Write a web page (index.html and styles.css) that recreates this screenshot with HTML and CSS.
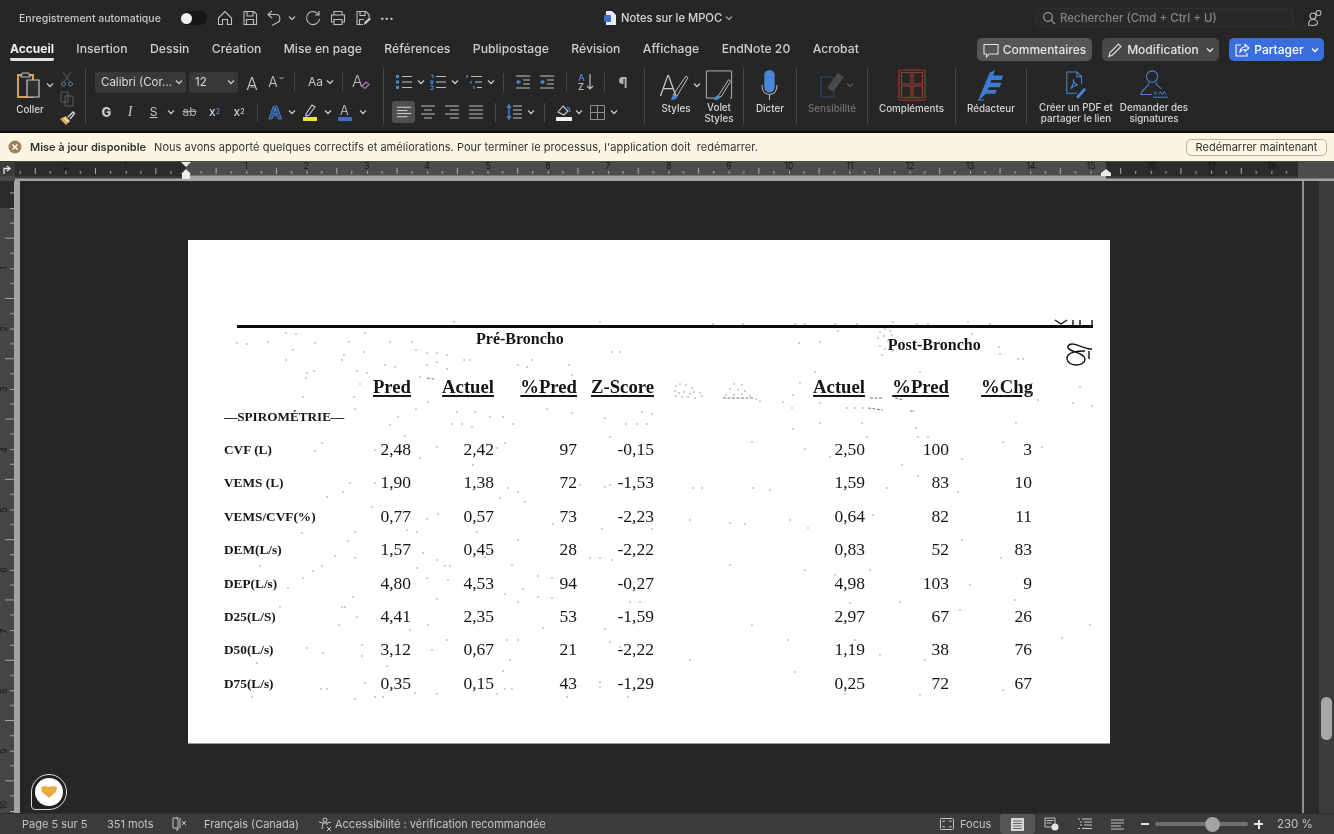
FILE: index.html
```html
<!DOCTYPE html>
<html lang="fr">
<head>
<meta charset="utf-8">
<title>Notes sur le MPOC</title>
<link rel="stylesheet" href="styles.css">
</head>
<body>
<svg class="defs" width="0" height="0" aria-hidden="true"><defs>
<symbol id="car" viewBox="0 0 8 6"><path d="M1 1.5l3 3 3-3" fill="none" stroke="currentColor" stroke-width="1.3"/></symbol>
<symbol id="lines" viewBox="0 0 20 16"><path d="M1 2h18M1 6h13M1 10h18M1 14h13" fill="none" stroke="currentColor" stroke-width="1.3"/></symbol>
</defs></svg>
<div class="app">
  <header class="titlebar">
    <span class="autosave">Enregistrement automatique</span>
    <span class="toggle"><span class="knob"></span></span>
    <svg class="qa q-home" width="16" height="16" viewBox="0 0 16 16"><path d="M1.5 8 8 1.5 14.500 8v6.500h-4V9.500h-5v5h-4z"/></svg>
    <svg class="qa q-save" width="16" height="16" viewBox="0 0 16 16"><path d="M2 1.500h10l2.500 2.500v10.500H2zM5 1.500v4.500h6V1.500M4.500 14.500V9.500h7v5"/></svg>
    <svg class="qa q-undo" width="16" height="16" viewBox="0 0 16 16"><path d="M6 1 2 4.500 6 8M2 4.500h7.500a4.300 4.300 0 0 1 1 8.500L6 15.500"/></svg>
    <svg class="qcar"><use href="#car"/></svg>
    <svg class="qa q-redo" width="16" height="16" viewBox="0 0 16 16"><path d="M13.500 4.500A6.500 6.500 0 1 0 14.500 9M14 1v4h-4"/></svg>
    <svg class="qa q-print" width="16" height="16" viewBox="0 0 16 16"><path d="M4 5V1.500h8V5M4 12H1.500V5h13v7H12M4 9.500h8v5H4z"/></svg>
    <svg class="qa q-as" width="16" height="16" viewBox="0 0 16 16"><path d="M8 14.500H2v-13h9l3 3v3M5 1.500v4h5v-4M4.500 14V9.500H9"/><path class="fillw" d="M9 15l.5-3 5-4.500 1.500 1.500-5 4.700z"/></svg>
    <span class="more">···</span>
    <div class="doc">
      <svg width="12" height="14" viewBox="0 0 12 14"><path d="M2 0h6l4 4v10H2z" fill="#e8edf5"/><rect y="4" width="7" height="7" rx="1" fill="#3c6fc4"/></svg>
      <span>Notes sur le MPOC</span>
      <svg class="doccar"><use href="#car"/></svg>
    </div>
    <div class="search">
      <svg width="14" height="14" viewBox="0 0 14 14"><circle cx="6" cy="6" r="4.300" fill="none" stroke="#9a9a9a" stroke-width="1.200"/><path d="M9.200 9.200 13 13" stroke="#9a9a9a" stroke-width="1.200"/></svg>
      <span>Rechercher (Cmd + Ctrl + U)</span>
    </div>
    <svg class="qa q-people" width="16" height="18" viewBox="0 0 16 18"><circle cx="6" cy="7" r="3"/><circle cx="11.500" cy="4" r="2.500"/><path d="M1.500 16c0-4 2-5.500 4.500-5.500s4.500 1.500 4.500 3c0 2-2 3-4.500 3z"/></svg>
  </header>

  <nav class="tabsbar">
    <div class="tabs">
      <span class="tab active">Accueil</span><span class="tab">Insertion</span><span class="tab">Dessin</span><span class="tab">Création</span><span class="tab">Mise en page</span><span class="tab">Références</span><span class="tab">Publipostage</span><span class="tab">Révision</span><span class="tab">Affichage</span><span class="tab">EndNote 20</span><span class="tab">Acrobat</span>
    </div>
    <div class="actions">
      <button class="act act-com"><svg width="16" height="16" viewBox="0 0 16 16"><path d="M1 2.500h14v9.500H6L3.500 15v-3H1z" fill="none" stroke="#e2e2e2" stroke-width="1.100"/></svg>Commentaires</button>
      <button class="act act-mod"><svg width="16" height="16" viewBox="0 0 16 16"><path d="M2 14.500l1-4L11.500 2l2.500 2.500L5.500 13z" fill="none" stroke="#e2e2e2" stroke-width="1.100"/></svg>Modification<svg class="actcar"><use href="#car"/></svg></button>
      <button class="act act-share"><svg width="16" height="16" viewBox="0 0 16 16"><path d="M7 3H2v11h11v-3M6 10c0-3 2-5 5-5V2.500L15 6l-4 3.500V7.500C9 7.500 7 8.500 6 10z" fill="none" stroke="#fff" stroke-width="1.100"/></svg>Partager<svg class="actcar"><use href="#car"/></svg></button>
    </div>
  </nav>

  <section class="ribbon">
    <div class="grp g-clip">
      <div class="paste">
        <svg width="30" height="28" viewBox="0 0 30 28"><path d="M3 4h15v22H3z" fill="none" stroke="#d9a24f" stroke-width="2"/><path d="M7 4V2h7v2l1.500 2h-10z" fill="#2a2a2a" stroke="#bbb"/><path d="M12 9h12v17H12z" fill="#2f2f2f" stroke="#c9c9c9" stroke-width="1.200"/></svg>
        <span class="lbl">Coller</span>
      </div>
      <svg class="pastecar"><use href="#car"/></svg>
      <div class="clipcol">
        <svg width="14" height="16" viewBox="0 0 14 16"><path d="M3 1l7 10M11 1 4 11" stroke="#5b5b5b" fill="none"/><circle cx="3.500" cy="13" r="2" fill="none" stroke="#5f7fa5"/><circle cx="10.500" cy="13" r="2" fill="none" stroke="#5f7fa5"/></svg>
        <svg width="14" height="16" viewBox="0 0 14 16"><path d="M1 1h7v10H1zM5 5h8v10H5z" fill="none" stroke="#5b5b5b"/></svg>
        <svg width="16" height="15" viewBox="0 0 16 15"><path d="M1 8l6-3 4 5-4 4z" fill="#e0aa55"/><path d="M9 6l5-5 1.500 1.500L11 8" fill="none" stroke="#ddd" stroke-width="1.300"/><path d="M5 7l5 4" stroke="#eee" stroke-width="1.500"/></svg>
      </div>
    </div>

    <div class="grp g-font">
      <div class="row">
        <span class="sel sel-font">Calibri (Cor...<svg class="c"><use href="#car"/></svg></span>
        <span class="sel sel-size">12<svg class="c"><use href="#car"/></svg></span>
        <span class="ib w24 glyph big">A<svg class="hat" width="5" height="4" viewBox="0 0 5 4"><path d="M.5 3 2.500 1l2 2" fill="none" stroke="#c0c0c0"/></svg></span>
        <span class="ib w24 glyph med">A<svg class="hat" width="5" height="4" viewBox="0 0 5 4"><path d="M.5 1l2 2 2-2" fill="none" stroke="#c0c0c0"/></svg></span>
        <span class="sp w12"><i></i></span>
        <span class="ib w25 glyph aa">Aa</span>
        <span class="ib w10"><svg class="c"><use href="#car"/></svg></span>
        <span class="sp w14"><i></i></span>
        <span class="ib w24"><svg width="20" height="20" viewBox="0 0 20 20"><text x="1" y="15" class="svgt">A</text><path d="M11 14l4-4 3 2.500-4 4z" fill="none" stroke="#b06cc0" stroke-width="1.200"/></svg></span>
      </div>
      <div class="row">
        <span class="ib w23 glyph bold">G</span>
        <span class="ib w24 glyph ital">I</span>
        <span class="ib w23 glyph und">S</span>
        <span class="ib w12"><svg class="c"><use href="#car"/></svg></span>
        <span class="ib w25 glyph strike">ab</span>
        <span class="ib w25 glyph xs">x<sub>2</sub></span>
        <span class="ib w24 glyph xs">x<sup>2</sup></span>
        <span class="sp w12"><i></i></span>
        <span class="ib w23"><svg width="16" height="18" viewBox="0 0 16 18"><text x="1.500" y="16" class="svgt bluet">A</text></svg></span>
        <span class="ib w12"><svg class="c"><use href="#car"/></svg></span>
        <span class="ib w24"><svg width="16" height="18" viewBox="0 0 16 18"><path d="M4 11 10 2l3 2-6 8-3 1z" fill="none" stroke="#cfcfcf" stroke-width="1.100"/><rect x="1" y="14" width="14" height="4" fill="#f2e338"/></svg></span>
        <span class="ib w11"><svg class="c"><use href="#car"/></svg></span>
        <span class="ib w24"><svg width="16" height="18" viewBox="0 0 16 18"><text x="3" y="12" class="svgt small">A</text><rect x="1" y="14" width="14" height="4" fill="#3f6fc4"/></svg></span>
        <span class="ib w11"><svg class="c"><use href="#car"/></svg></span>
      </div>
    </div>

    <div class="grp g-para">
      <div class="row">
        <span class="ib w24"><svg width="16" height="16" viewBox="0 0 16 16"><path d="M6 2.500h10M6 8h10M6 13.500h10" stroke="#bdbdbd" stroke-width="1.200"/><path d="M0 1h3v3H0zM0 6.500h3v3H0zM0 12h3v3H0z" fill="#4a8ad4"/></svg></span>
        <span class="ib w10"><svg class="c"><use href="#car"/></svg></span>
        <span class="ib w24"><svg width="16" height="16" viewBox="0 0 16 16"><path d="M6 2.500h10M6 8h10M6 13.500h10" stroke="#bdbdbd" stroke-width="1.200"/><path d="M1 1h2v3M0 7h3v1.200H1v1.300h2M0 12h3v3.500H0" fill="none" stroke="#4a8ad4"/></svg></span>
        <span class="ib w10"><svg class="c"><use href="#car"/></svg></span>
        <span class="ib w24 ml2"><svg width="16" height="16" viewBox="0 0 16 16"><path d="M5 2.500h11M9 8h7M11 13.500h5" stroke="#bdbdbd" stroke-width="1.200"/><path d="M1 1v3M5 7v2.500M8 12v3" fill="none" stroke="#4a8ad4" stroke-width="1.300"/></svg></span>
        <span class="ib w10"><svg class="c"><use href="#car"/></svg></span>
        <span class="sp w15"><i></i></span>
        <span class="ib w24"><svg width="14" height="14" viewBox="0 0 14 14"><path d="M0 1h14M7 5h7M7 9h7M0 13h14" stroke="#bdbdbd" stroke-width="1.200"/><path d="M5 7H1M3 5 1 7l2 2" fill="none" stroke="#4a8ad4" stroke-width="1.300"/></svg></span>
        <span class="ib w24"><svg width="14" height="14" viewBox="0 0 14 14"><path d="M0 1h14M7 5h7M7 9h7M0 13h14" stroke="#bdbdbd" stroke-width="1.200"/><path d="M0 7h4M2 5l2 2-2 2" fill="none" stroke="#4a8ad4" stroke-width="1.300"/></svg></span>
        <span class="sp w14"><i></i></span>
        <span class="ib w26"><svg width="16" height="18" viewBox="0 0 16 18"><text x="0" y="8" class="svgt tiny blues">A</text><text x="0" y="17" class="svgt tiny">Z</text><path d="M12 1v15M9 13l3 3 3-3" fill="none" stroke="#bdbdbd" stroke-width="1.200"/></svg></span>
        <span class="sp w10"><i></i></span>
        <span class="ib w24 ml2 glyph para">¶</span>
      </div>
      <div class="row">
        <span class="ib w23 on"><svg class="al"><use href="#lines"/></svg></span>
        <span class="ib w24 ml1"><svg width="14" height="14" viewBox="0 0 14 14"><path d="M0 1h14M3 5h8M0 9h14M3 13h8" stroke="#bdbdbd" stroke-width="1.200"/></svg></span>
        <span class="ib w24"><svg width="14" height="14" viewBox="0 0 14 14"><path d="M0 1h14M5 5h9M0 9h14M5 13h9" stroke="#bdbdbd" stroke-width="1.200"/></svg></span>
        <span class="ib w24"><svg width="14" height="14" viewBox="0 0 14 14"><path d="M0 1h14M0 5h14M0 9h14M0 13h14" stroke="#bdbdbd" stroke-width="1.200"/></svg></span>
        <span class="sp w14"><i></i></span>
        <span class="ib w24"><svg width="16" height="16" viewBox="0 0 16 16"><path d="M7 2h9M7 6h9M7 10h9M7 14h9" stroke="#bdbdbd" stroke-width="1.200"/><path d="M3 2v12M1 4l2-3 2 3M1 12l2 3 2-3" fill="none" stroke="#4a8ad4" stroke-width="1.300"/></svg></span>
        <span class="ib w10"><svg class="c"><use href="#car"/></svg></span>
        <span class="sp w16"><i></i></span>
        <span class="ib w24"><svg width="16" height="18" viewBox="0 0 16 18"><path d="M2 9l5-6 5 5-4 4z" fill="none" stroke="#cfcfcf" stroke-width="1.100"/><path d="M11 4q3 1 3 5" stroke="#4a8ad4" fill="none" stroke-width="1.300"/><rect y="14" width="16" height="4" fill="#efefef"/></svg></span>
        <span class="ib w10 mln"><svg class="c"><use href="#car"/></svg></span>
        <span class="ib w24 ml1"><svg width="15" height="15" viewBox="0 0 15 15"><path d="M.5.5h14v14H.5zM7.500.5v14M.5 7.500h14" fill="none" stroke="#8f8f8f"/></svg></span>
        <span class="ib w10"><svg class="c"><use href="#car"/></svg></span>
      </div>
    </div>

    <div class="grp g-styles">
      <div class="big b-styles">
        <div class="ico">
          <svg width="34" height="32" viewBox="0 0 34 32"><text x="0" y="27" class="svgt huge">A</text><path d="M14 26 27 7l2 1.500L18 27z" fill="none" stroke="#bdbdbd"/><path d="M12 31c0-3 2-5 5-4.500s1 4.500-5 4.500z" fill="#4a8ad4"/></svg>
          <svg class="bigcar"><use href="#car"/></svg>
        </div>
        <span class="lbl">Styles</span>
      </div>
      <div class="big b-volet">
        <div class="ico"><svg width="30" height="32" viewBox="0 1 30 33"><path d="M12 31H2V3h26v28h-2" fill="none" stroke="#b5b5b5"/><path d="M14 29 25 12l2 1.500L17 30z" fill="none" stroke="#bdbdbd"/><path d="M10 33c0-3 2-5 5-4.500s1 4.500-5 4.500z" fill="#4a8ad4"/></svg></div>
        <span class="lbl">Volet<br>Styles</span>
      </div>
    </div>
    <div class="grp g-dict">
      <div class="big">
        <div class="ico"><svg width="19" height="32" viewBox="0 1 20 34"><rect x="4.500" y="2" width="11" height="24" rx="5.500" fill="#4a86d8"/><path d="M2 18c0 6 3 10 8 10s8-4 8-10M10 28v6" fill="none" stroke="#bdbdbd" stroke-width="1.100"/></svg></div>
        <span class="lbl">Dicter</span>
      </div>
    </div>
    <div class="grp g-sens">
      <div class="big dim">
        <div class="ico">
          <svg width="26" height="32" viewBox="0 0 26 32"><path d="M2 8h11l2 3v17H2z" fill="none" stroke="#2e4663" stroke-width="1.200"/><path d="M8 19 19 4l6 4-11 15z" fill="#4a4a4a"/></svg>
          <svg class="bigcar senscar"><use href="#car"/></svg>
        </div>
        <span class="lbl">Sensibilité</span>
      </div>
    </div>
    <div class="grp g-comp">
      <div class="big">
        <div class="ico"><svg width="28" height="32" viewBox="0 3 28 32"><path d="M1 4h26v30H1zM3.500 6.500h9.500v11.500H3.500zM15 6.500h9.500v11.500H15zM3.500 20h9.500v11.500H3.500zM15 20h9.500v11.500H15z" fill="none" stroke="#97412a" stroke-width="1.100"/></svg></div>
        <span class="lbl">Compléments</span>
      </div>
    </div>
    <div class="grp g-red">
      <div class="big">
        <div class="ico"><svg width="29" height="32" viewBox="0 1 30 35"><path d="M2 34 14 5l6-3-2 6h11l-2 5H16l-1 3h12l-2 5H13l-1 3h10l-2 4H10l-7 7z" fill="#3f7bd0"/><path d="M1 35h7" stroke="#3f7bd0" stroke-width="1.200"/></svg></div>
        <span class="lbl">Rédacteur</span>
      </div>
    </div>
    <div class="grp g-pdf">
      <div class="big b-pdf">
        <div class="ico"><svg width="24" height="32" viewBox="0 2 26 34"><path d="M14 28H3V5h11l5 5v8M14 5v5h5M7 23c2-2 4-7 3-10 1 4 3 6 5 6-3 0-6 2-8 4z" fill="none" stroke="#4a86d8" stroke-width="1.100"/><path d="M15 32l7-8" stroke="#4a86d8" stroke-width="3" stroke-linecap="round" fill="none"/></svg></div>
        <span class="lbl">Créer un PDF et<br>partager le lien</span>
      </div>
      <div class="big b-sign">
        <div class="ico"><svg width="32" height="32" viewBox="0 2 34 34"><circle cx="15" cy="10" r="6" fill="none" stroke="#4a86d8" stroke-width="1.100"/><path d="M12 16c0 4-8 8-9 13h12M19 16c0 3 3 5 6 7" fill="none" stroke="#4a86d8" stroke-width="1.100"/><path d="M17 26l3 3m0-3-3 3M22 29l2-3 2 3 2-3 2 3M16 32h16" fill="none" stroke="#4a86d8"/></svg></div>
        <span class="lbl">Demander des<br>signatures</span>
      </div>
    </div>
  </section>

  <aside class="notice">
    <svg class="nclose" width="14" height="14" viewBox="0 0 14 14"><circle cx="7" cy="7" r="6.500" fill="#a08257"/><path d="M4.500 4.500l5 5m0-5-5 5" stroke="#fff" stroke-width="1.500"/></svg>
    <strong>Mise à jour disponible</strong>
    <span class="ntext">Nous avons apporté quelques correctifs et améliorations. Pour terminer le processus, l'application doit&nbsp; redémarrer.</span>
    <button class="restart">Redémarrer maintenant</button>
  </aside>

  <svg class="hruler" width="1334" height="20" viewBox="0 0 1334 20">
    <defs>
      <pattern id="hticks" x="186" y="0" width="60.3" height="20" patternUnits="userSpaceOnUse">
        <path d="M15.080 10v3M45.230 10v3M30.150 7v6M.5 10v3" stroke="#aaa" fill="none"/>
      </pattern>
    </defs>
    <rect width="1334" height="20" fill="#4c4c4c"/>
    <rect x="0" y="0" width="15" height="15" fill="#3b3b3b"/>
    <path d="M4 13V7.500h5M7 5l3 2.500L7 10" fill="none" stroke="#e5e5e5" stroke-width="1.300"/>
    <rect x="0" y="15" width="15" height="5" fill="#4a4a4a"/>
    <rect x="15" y="1" width="171" height="16" fill="#2b2b2b"/>
    <rect x="1106" y="1" width="192" height="16" fill="#2b2b2b"/>
    <rect x="15" y="15" width="171" height="2.500" fill="#3b3b3b"/>
    <rect x="1106" y="15" width="192" height="2.500" fill="#3b3b3b"/>
    <rect x="186" y="14.500" width="920" height="5.500" fill="#a3a3a3"/>
    <rect x="15" y="17.500" width="171" height="2.500" fill="#a3a3a3"/>
    <rect x="1106" y="17.500" width="228" height="2.500" fill="#a3a3a3"/>
    <rect x="15" y="0" width="1283" height="14" fill="url(#hticks)"/>
    <g class="rnums">
      <text x="65" y="8">2</text><text x="125.500" y="8">1</text>
      <text x="246" y="8">1</text><text x="306" y="8">2</text><text x="367" y="8">3</text><text x="427" y="8">4</text><text x="488" y="8">5</text><text x="548" y="8">6</text><text x="608" y="8">7</text><text x="669" y="8">8</text><text x="729" y="8">9</text><text x="789" y="8">10</text><text x="850" y="8">11</text><text x="910" y="8">12</text><text x="970" y="8">13</text><text x="1031" y="8">14</text><text x="1091" y="8">15</text><text x="1152" y="8">16</text><text x="1212" y="8">17</text><text x="1272" y="8">18</text>
    </g>
    <path d="M181 1h10l-5 5zM181 13l5-5 5 5zM182 13h8v5h-8zM1101 15v-3l5-4 5 4v3z" fill="#ececec"/>
  </svg>

  <main class="workspace">
    <svg class="vruler" width="20" height="632" viewBox="0 0 20 632">
      <defs>
        <pattern id="vticks" x="0" y="27" width="20" height="60.3" patternUnits="userSpaceOnUse">
          <path d="M10 15.080h4M10 45.230h4M5 30.150h9M10 .5h4" stroke="#a8a8a8" fill="none"/>
        </pattern>
      </defs>
      <rect width="20" height="632" fill="#454545"/>
      <rect width="15" height="27" fill="#2b2b2b"/>
      <rect width="15" height="632" fill="url(#vticks)"/>
      <rect x="14" width="6" height="632" fill="#a3a3a3"/>
      <g class="vnums">
        <text transform="translate(7 87) rotate(-90)">1</text><text transform="translate(7 148) rotate(-90)">2</text><text transform="translate(7 208) rotate(-90)">3</text><text transform="translate(7 269) rotate(-90)">4</text><text transform="translate(7 329) rotate(-90)">5</text><text transform="translate(7 389) rotate(-90)">6</text><text transform="translate(7 450) rotate(-90)">7</text><text transform="translate(7 510) rotate(-90)">8</text><text transform="translate(7 570) rotate(-90)">9</text><text transform="translate(7 624) rotate(-90)">10</text>
      </g>
    </svg>
    <div class="canvas">
      <article class="page">
        <div class="scan">
          <div class="rule"></div>
          <div class="subheads"><span class="pre">Pré-Broncho</span><span class="post">Post-Broncho</span></div>
          <div class="grid head">
            <span></span><span>Pred</span><span>Actuel</span><span>%Pred</span><span>Z-Score</span><span>Actuel</span><span>%Pred</span><span>%Chg</span>
          </div>
          <div class="spiro">—SPIROMÉTRIE—</div>
          <div class="grid data"><span class="l">CVF (L)</span><span>2,48</span><span>2,42</span><span>97</span><span>-0,15</span><span>2,50</span><span>100</span><span>3</span></div>
          <div class="grid data"><span class="l">VEMS (L)</span><span>1,90</span><span>1,38</span><span>72</span><span>-1,53</span><span>1,59</span><span>83</span><span>10</span></div>
          <div class="grid data"><span class="l">VEMS/CVF(%)</span><span>0,77</span><span>0,57</span><span>73</span><span>-2,23</span><span>0,64</span><span>82</span><span>11</span></div>
          <div class="grid data"><span class="l">DEM(L/s)</span><span>1,57</span><span>0,45</span><span>28</span><span>-2,22</span><span>0,83</span><span>52</span><span>83</span></div>
          <div class="grid data"><span class="l">DEP(L/s)</span><span>4,80</span><span>4,53</span><span>94</span><span>-0,27</span><span>4,98</span><span>103</span><span>9</span></div>
          <div class="grid data"><span class="l">D25(L/S)</span><span>4,41</span><span>2,35</span><span>53</span><span>-1,59</span><span>2,97</span><span>67</span><span>26</span></div>
          <div class="grid data"><span class="l">D50(L/s)</span><span>3,12</span><span>0,67</span><span>21</span><span>-2,22</span><span>1,19</span><span>38</span><span>76</span></div>
          <div class="grid data"><span class="l">D75(L/s)</span><span>0,35</span><span>0,15</span><span>43</span><span>-1,29</span><span>0,25</span><span>72</span><span>67</span></div>
        </div>
        <svg class="specks" width="922" height="503" viewBox="188 240 922 503">
          <path class="dots" d="M454 322h.01M600 322h.01M237 343h.01M247 344h.01M268 342h.01M286 333h.01M296 334h.01M293 350h.01M286 360h.01M315 343h.01M349 342h.01M344 355h.01M342 360h.01M365 333h.01M364 352h.01M390 342h.01M412 342h.01M416 350h.01M427 353h.01M437 353h.01M447 355h.01M427 365h.01M395 367h.01M385 365h.01M437 362h.01M464 360h.01M470 360h.01M447 369h.01M532 360h.01M518 365h.01M527 367h.01M569 365h.01M572 375h.01M612 352h.01M620 352h.01M307 373h.01M314 371h.01M306 378h.01M357 371h.01M367 373h.01M420 377h.01M303 397h.01M354 397h.01M360 384h.01M428 402h.01M416 409h.01M355 409h.01M457 412h.01M475 412h.01M490 417h.01M503 417h.01M547 409h.01M572 413h.01M605 418h.01M642 412h.01M652 414h.01M398 417h.01M390 425h.01M452 424h.01M462 424h.01M472 427h.01M513 424h.01M626 424h.01M637 424h.01M647 424h.01M405 436h.01M322 443h.01M315 451h.01M375 450h.01M437 447h.01M497 448h.01M505 443h.01M610 437h.01M420 458h.01M473 465h.01M350 483h.01M375 483h.01M508 488h.01M580 485h.01M605 487h.01M610 485h.01M327 497h.01M343 492h.01M372 507h.01M427 519h.01M438 514h.01M518 492h.01M500 498h.01M525 502h.01M553 524h.01M602 529h.01M633 523h.01M652 529h.01M355 532h.01M417 532h.01M407 530h.01M302 533h.01M477 532h.01M518 540h.01M348 541h.01M335 556h.01M355 558h.01M423 553h.01M590 558h.01M600 558h.01M612 560h.01M437 560h.01M445 566h.01M450 566h.01M485 557h.01M512 565h.01M260 566h.01M322 566h.01M313 571h.01M417 568h.01M303 578h.01M288 588h.01M427 578h.01M448 580h.01M538 576h.01M552 578h.01M523 589h.01M505 594h.01M353 597h.01M345 607h.01M342 607h.01M437 599h.01M280 607h.01M518 602h.01M538 597h.01M552 598h.01M630 602h.01M640 602h.01M357 617h.01M339 625h.01M428 625h.01M410 630h.01M605 629h.01M543 628h.01M307 648h.01M323 653h.01M362 645h.01M362 656h.01M257 663h.01M447 640h.01M507 640h.01M518 640h.01M432 650h.01M510 660h.01M503 671h.01M387 666h.01M610 642h.01M620 647h.01M600 682h.01M600 687h.01M365 683h.01M321 689h.01M327 689h.01M505 689h.01M512 689h.01M497 694h.01M437 694h.01M252 697h.01M355 699h.01M375 697h.01M383 697h.01M567 697h.01M628 697h.01M415 693h.01M713 324h.01M743 324h.01M795 324h.01M805 324h.01M835 324h.01M857 324h.01M893 322h.01M917 324h.01M928 324h.01M968 322h.01M990 324h.01M838 331h.01M820 342h.01M799 343h.01M972 334h.01M999 347h.01M1000 354h.01M1018 359h.01M1023 359h.01M815 372h.01M920 372h.01M800 383h.01M1080 387h.01M1092 406h.01M1073 403h.01M1038 400h.01M793 395h.01M792 408h.01M783 402h.01M820 403h.01M847 408h.01M855 408h.01M863 408h.01M862 423h.01M820 423h.01M793 429h.01M916 428h.01M1016 423h.01M867 437h.01M918 437h.01M928 437h.01M1003 442h.01M1042 447h.01M752 442h.01M805 449h.01M830 457h.01M962 459h.01M902 465h.01M918 476h.01M887 488h.01M693 488h.01M702 488h.01M753 488h.01M770 490h.01M958 492h.01M730 523h.01M745 524h.01M790 520h.01M808 528h.01M873 515h.01M962 540h.01M1001 558h.01M805 570h.01M835 575h.01M870 570h.01M1015 600h.01M752 625h.01M788 640h.01M855 640h.01M925 660h.01M1062 638h.01M880 655h.01M795 672h.01M845 694h.01M920 695h.01M1003 690h.01M960 610h.01M900 602h.01M690 660h.01M730 565h.01M690 520h.01M1090 625h.01M850 603h.01M970 585h.01M676 386h.01M680 384h.01M686 385h.01M692 388h.01M675 391h.01M679 393h.01M684 392h.01M690 394h.01M694 392h.01M700 393h.01M702 396h.01M676 396h.01M682 397h.01M688 397h.01M695 398h.01M734 384h.01M742 385h.01M730 389h.01M738 390h.01M745 391h.01M726 395h.01M734 395h.01M742 394h.01M750 396h.01M756 399h.01M760 401h.01M880 332h.01M885 329h.01M890 331h.01M878 338h.01M884 336h.01M892 335h.01M888 341h.01M880 346h.01M885 349h.01M893 351h.01M882 355h.01M896 345h.01"/>
          <path class="dashes" d="M723 398h30M427 378l7 1M870 398h12M868 408l15 2M910 411h5M895 398l9 2M1026 393h6"/>
          <path class="scrib" d="M1092 349C1085 350 1072 340 1068 346c-2 6 17 6 17 13 0 8-17 8-18 0-1-7 11-8 18-8M1089 351v8M1055 320l6 4 6-4M1073 320v5M1080 320v5M1092 320v5"/>
        </svg>
      </article>
      <div class="bubble"><span class="bubble-in"><svg width="18" height="14" viewBox="0 0 18 14"><path d="M1 2 5 1l4 1 4-1 4 1-1 5-7 6-7-6z" fill="#e8ad3c"/></svg></span></div>
    </div>
    <div class="rightpane">
      <div class="gutter"></div>
      <div class="vscroll"><div class="thumb"></div></div>
    </div>
  </main>

  <footer class="status">
    <span class="s-page">Page 5 sur 5</span>
    <span class="s-words">351 mots</span>
    <svg class="s-book" width="16" height="14" viewBox="0 0 16 14"><path d="M6 1H1v10h5M6 1v12M6 1h-2M6 13H4M8 1v10M10 4l4 4m0-4-4 4" fill="none" stroke="#c6c6c6"/></svg>
    <span class="s-lang">Français (Canada)</span>
    <svg class="s-acc" width="15" height="15" viewBox="0 0 15 15"><circle cx="7" cy="3" r="2" fill="none" stroke="#c6c6c6"/><path d="M1 5l4 1h4l4-1M5 6l-1 6M9 6v2M9 10l4 4m0-4-4 4" fill="none" stroke="#c6c6c6"/></svg>
    <span class="s-a11y">Accessibilité : vérification recommandée</span>
    <div class="s-right">
      <svg class="s-focus" width="14" height="12" viewBox="0 0 14 12"><rect x=".5" y=".5" width="13" height="11" rx="1" fill="none" stroke="#c6c6c6"/><path d="M3 4V3h2M9 3h2v1M3 8v1h2M9 9h2V8" fill="none" stroke="#c6c6c6"/></svg>
      <span class="s-ftxt">Focus</span>
      <span class="view on"><svg width="13" height="13" viewBox="0 0 13 13"><rect width="13" height="13" fill="#d8d8d8"/><path d="M2 3h9M2 5.500h9M2 8h9M2 10.500h9" stroke="#666"/></svg></span>
      <span class="view"><svg width="15" height="14" viewBox="0 0 15 14"><path d="M1 1h10v9H1zM2.500 3.500h7M2.500 6h5" fill="none" stroke="#c6c6c6"/><circle cx="11" cy="10" r="3.500" fill="#e6e6e6"/></svg></span>
      <span class="view"><svg width="14" height="12" viewBox="0 0 14 12"><path d="M4 1h10M6 4h8M6 7h8M4 10.500h10M0 1h2M2 4h2M2 7h2M0 10.500h2" fill="none" stroke="#c6c6c6"/></svg></span>
      <span class="view"><svg width="13" height="11" viewBox="0 0 13 11"><path d="M0 1h13M0 4h13M0 7h10M0 10h13" fill="none" stroke="#c6c6c6" stroke-width="1.200"/></svg></span>
      <span class="zminus"></span>
      <div class="slider"><span class="sthumb"></span></div>
      <span class="zplus"></span>
      <span class="zoomv">230 %</span>
    </div>
  </footer>
</div>
</body>
</html>
```
FILE: styles.css
```css
* { box-sizing: border-box; }
html, body { margin: 0; padding: 0; height: 100%; background: #262626; overflow: hidden; }
svg { overflow: visible; }
.defs { position: absolute; }
.app {
  width: 1334px; height: 834px; display: flex; flex-direction: column;
  background: #262626; color: #d4d4d4; overflow: hidden;
  font-family: "Inter", "Liberation Sans", sans-serif;
  filter: blur(.25px);
}
button { font-family: inherit; }

/* title bar */
.titlebar { height: 36px; flex: none; display: flex; align-items: center; padding-left: 19px; }
.autosave { font-size: 10.5px; font-weight: 500; color: #c8c8c8; width: 162px; white-space: nowrap; }
.toggle { width: 26px; height: 14px; border-radius: 7px; background: #161616; display: flex; align-items: center; margin-right: 10px; }
.knob { width: 11px; height: 11px; border-radius: 50%; background: #f2f2f2; }
.qa { fill: none; stroke: #bdbdbd; stroke-width: 1.100; flex: none; }
.qa .fillw { fill: #d0d0d0; stroke: none; }
.q-home { margin-right: 9px; }
.q-save { margin-right: 8px; }
.q-undo { margin-right: 6px; }
.qcar { width: 8px; height: 6px; color: #b5b5b5; margin-right: 9px; }
.q-redo { margin-right: 9px; }
.q-print { margin-right: 9px; }
.q-as { margin-right: 9px; }
.more { font-size: 13px; font-weight: 800; color: #cfcfcf; width: 14px; letter-spacing: 0; }
.doc { display: flex; align-items: center; gap: 5px; margin-left: 210px; font-size: 11.2px; font-weight: 500; color: #d8d8d8; width: 432px; white-space: nowrap; }
.doccar { width: 8px; height: 6px; color: #9a9a9a; margin-left: -2px; }
.search { width: 258px; height: 20px; border: 1px solid #2f2f2f; border-radius: 4px; display: flex; align-items: center; gap: 4px; padding-left: 5px; font-size: 11.5px; font-weight: 500; color: #858585; background: #292929; white-space: nowrap; }
.q-people { margin-left: 13px; }

/* tabs */
.tabsbar { height: 28px; flex: none; display: flex; justify-content: space-between; }
.tabs { display: flex; gap: 22.400px; padding-left: 10px; font-size: 12.2px; font-weight: 500; color: #cfcfcf; white-space: nowrap; }
.tab { height: 28px; line-height: 25px; }
.tab.active { color: #f0f0f0; font-weight: 700; border-bottom: 3px solid #e4e4e4; height: 25px; line-height: 25px; font-size: 12px; border-radius: 0 0 2px 2px; }
.actions { display: flex; gap: 10px; padding-right: 10px; padding-top: 2px; height: 25px; }
.act { height: 23px; border: 0; border-radius: 5px; display: flex; align-items: center; justify-content: center; gap: 4px; color: #e4e4e4; font-size: 12px; font-weight: 500; padding: 0; white-space: nowrap; }
.act-com { width: 115px; background: #565656; }
.act-mod { width: 117px; background: #484848; }
.act-share { width: 95px; background: #3a6fdb; color: #fff; }
.actcar { width: 8px; height: 6px; margin-left: 3px; }

/* ribbon */
.ribbon { height: 67px; flex: none; display: flex; padding-top: 4px; padding-bottom: 7px; border-bottom: 0; }
.grp { height: 56px; border-right: 1px solid #474747; flex: none; display: flex; }
.g-clip { width: 86px; position: relative; padding-left: 14px; }
.g-font { width: 298px; flex-direction: column; gap: 8px; padding: 3px 0 0 9px; }
.g-para { width: 261px; flex-direction: column; gap: 8px; padding: 3px 0 0 8px; }
.g-styles { width: 99px; }
.g-dict { width: 53px; justify-content: center; }
.g-sens { width: 71px; justify-content: center; }
.g-comp { width: 88px; justify-content: center; }
.g-red { width: 71px; justify-content: center; }
.g-pdf { border-right: 0; padding-left: 10px; gap: 2px; }
.lbl { font-size: 9.8px; font-weight: 500; color: #d6d6d6; line-height: 11px; text-align: center; white-space: nowrap; }
.paste { width: 32px; display: flex; flex-direction: column; align-items: center; padding-top: 3px; }
.paste .lbl { margin-top: 5px; }
.pastecar { width: 8px; height: 6px; color: #c8c8c8; margin-top: 14px; }
.clipcol { display: flex; flex-direction: column; align-items: center; gap: 4px; padding: 3px 0 0 5px; }
.row { display: flex; height: 22px; align-items: center; }
.sel { height: 21px; background: #383838; border-radius: 3px; display: flex; align-items: center; justify-content: space-between; padding: 0 3px 0 6px; font-size: 11.5px; color: #dcdcdc; white-space: nowrap; flex: none; }
.sel-font { width: 91px; margin-right: 3px; }
.sel-size { width: 49px; margin-right: 2px; }
.c { width: 8px; height: 6px; color: #c8c8c8; flex: none; }
.ib { height: 22px; display: flex; align-items: center; justify-content: center; flex: none; }
.sp { height: 22px; display: flex; justify-content: center; align-items: center; flex: none; }
.sp i { width: 1px; height: 19px; background: #474747; display: block; }
.w10 { width: 10px; } .w11 { width: 11px; } .w12 { width: 12px; } .w14 { width: 14px; } .w15 { width: 15px; } .w16 { width: 16px; }
.w23 { width: 23px; } .w24 { width: 24px; } .w25 { width: 25px; } .w26 { width: 26px; }
.ml1 { margin-left: 1px; } .ml2 { margin-left: 2px; } .mln { margin-left: -2px; }
.on { background: #505050; border-radius: 3px; }
.al { width: 16px; height: 14px; color: #d0d0d0; }
.glyph { color: #c9c9c9; font-size: 13px; line-height: 1; }
.hat { margin: -8px 0 0 1px; }
.glyph.big { font-size: 17px; font-weight: 300; }
.glyph.med { font-size: 14px; font-weight: 300; }
.glyph.aa { font-size: 12px; justify-content: flex-end; padding-right: 2px; }
.glyph.bold { font-weight: 800; font-size: 13px; }
.glyph.ital { font-family: "Liberation Serif", serif; font-style: italic; font-size: 14px; }
.glyph.und { text-decoration: underline; font-size: 12px; }
.glyph.strike { text-decoration: line-through; font-size: 12px; color: #aaa; }
.glyph.xs { font-size: 12px; font-weight: 500; }
.glyph.xs sub, .glyph.xs sup { font-size: 7px; line-height: 0; }
.glyph.xs sub { color: #4a86d8; }
.glyph.para { font-size: 15px; font-weight: 700; color: #b5b5b5; }
.svgt { font-family: "Inter", sans-serif; font-size: 16px; fill: #bdbdbd; font-weight: 300; }
.svgt.bluet { fill: #224f8e; stroke: #5b9be0; stroke-width: .7px; font-size: 18px; font-weight: 700; }
.svgt.small { font-size: 13px; fill: #cfcfcf; }
.svgt.tiny { font-size: 9.500px; font-weight: 500; }
.svgt.blues { fill: #4a86d8; }
.svgt.huge { font-size: 28px; font-weight: 200; fill: #c8c8c8; }

.big { display: flex; flex-direction: column; align-items: center; }
.big .ico { height: 35px; display: flex; align-items: flex-start; justify-content: center; position: relative; padding-top: 1px; }
.bigcar { width: 8px; height: 6px; color: #c8c8c8; position: absolute; right: -8px; top: 14px; }
.b-styles { width: 52px; margin-left: 5px; }
.b-volet { width: 36px; margin-left: -1px; }
.dim .lbl { color: #737373; }
.senscar { color: #5a5a5a; right: -9px; }
.b-pdf { width: 78px; }
.b-sign { width: 74px; }

/* notice */
.notice { height: 30px; flex: none; margin-top: 0; border-top: 2px solid #0c0c0c; background: #fcf5e3; display: flex; align-items: center; padding: 0 7px 0 8px; color: #33322f; font-size: 11px; white-space: nowrap; }
.nclose { margin-right: 8px; flex: none; }
.notice strong { font-weight: 600; margin-right: 8px; }
.ntext { flex: 1; letter-spacing: .04px; }
.restart { width: 141px; height: 17px; background: #fcf5e3; border: 1px solid #b5b1a6; border-radius: 5px; color: #33322f; font-size: 11px; padding: 0; }

/* rulers */
.hruler { display: block; flex: none; }
.rnums text { font-family: "Inter", sans-serif; font-size: 8.500px; fill: #151515; text-anchor: middle; }
.workspace { flex: 1; min-height: 0; display: flex; background: #262626; }
.vruler { flex: none; display: block; }
.vnums text { font-family: "Inter", sans-serif; font-size: 8.500px; fill: #151515; text-anchor: middle; }
.canvas { position: relative; width: 1282px; flex: none; padding: 59px 0 0 168px; }
.rightpane { flex: 1; display: flex; border-left: 2px solid #8e8e8e; }
.gutter { width: 15px; background: #2a2a2a; }
.vscroll { flex: 1; background: #3c3c3c; padding: 516px 2px 0; }
.thumb { height: 43px; background: #a8a8a8; border-radius: 6px; }

/* scanned page */
.page { width: 922px; height: 504px; background: #fff; position: relative; border-bottom: 1px solid #999; }
.scan { padding: 85px 17px 0 36px; font-family: "Liberation Serif", serif; color: #161616; filter: blur(.35px); }
.rule { height: 3px; background: #0d0d0d; margin-left: 13px; }
.subheads { height: 47px; display: flex; font-weight: 700; font-size: 16px; align-items: flex-start; }
.pre { margin-left: 252px; margin-top: 2px; }
.post { margin-left: 324px; margin-top: 8px; }
.grid { display: grid; grid-template-columns: 127px 60px 83px 83px 77px 211px 84px 83px; text-align: right; }
.head { font-weight: 700; font-size: 18.700px; line-height: 24px; height: 33px; text-decoration: underline; text-decoration-thickness: 1.500px; text-underline-offset: 2px; grid-template-columns: 127px 60px 83px 83px 77px 211px 84px 84px; }
.spiro { font-size: 13.200px; font-weight: 700; height: 17px; line-height: 17px; margin-bottom: 8px; }
.data { height: 33.400px; line-height: 33.400px; font-size: 17.500px; }
.data .l { text-align: left; font-size: 13.300px; font-weight: 700; }
.specks { position: absolute; inset: 0; pointer-events: none; }
.dots { stroke: #7a7a7a; stroke-width: 1.300; stroke-linecap: round; fill: none; }
.dashes { stroke: #777; stroke-width: 1; stroke-dasharray: 3 1.500; fill: none; }
.scrib { stroke: #111; stroke-width: 1.400; fill: none; }

/* bubble */
.bubble { position: absolute; left: 11px; top: 593px; width: 36px; height: 36px; border: 1px solid #dcdcdc; border-radius: 50% 50% 50% 4px; display: flex; align-items: center; justify-content: center; background: #1f1f1f; }
.bubble-in { width: 28px; height: 28px; background: #fff; border-radius: 50%; display: flex; align-items: center; justify-content: center; }

/* status bar */
.status { height: 21px; flex: none; background: #3b3b3b; border-top: 1px solid #2e2e2e; display: flex; align-items: center; padding-left: 22px; font-size: 11px; color: #c6c6c6; white-space: nowrap; }
.s-page { width: 85px; }
.s-words { width: 65px; }
.s-book { margin-right: 16px; }
.s-lang { width: 114px; }
.s-acc { margin-right: 2px; }
.s-a11y { width: 590px; }
.s-right { display: flex; align-items: center; height: 20px; margin-left: 15px; }
.s-focus { margin-right: 6px; }
.s-ftxt { width: 40px; }
.view { width: 33px; height: 20px; display: flex; align-items: center; justify-content: center; flex: none; }
.view.on { background: #565656; width: 35px; }
.zminus { width: 8px; height: 2px; background: #e2e2e2; margin: 0 6px 0 7px; }
.slider { width: 93px; height: 4px; border-radius: 2px; background: #6e6e6e; position: relative; display: flex; align-items: center; }
.sthumb { position: absolute; left: 50px; width: 15px; height: 15px; border-radius: 50%; background: #a3a3a3; }
.zplus { width: 9px; height: 9px; margin: 0 14px 0 6px; background: linear-gradient(#e8e8e8,#e8e8e8) center/9px 2px no-repeat, linear-gradient(#e8e8e8,#e8e8e8) center/2px 9px no-repeat; }
.zoomv { font-size: 11.500px; }
```
